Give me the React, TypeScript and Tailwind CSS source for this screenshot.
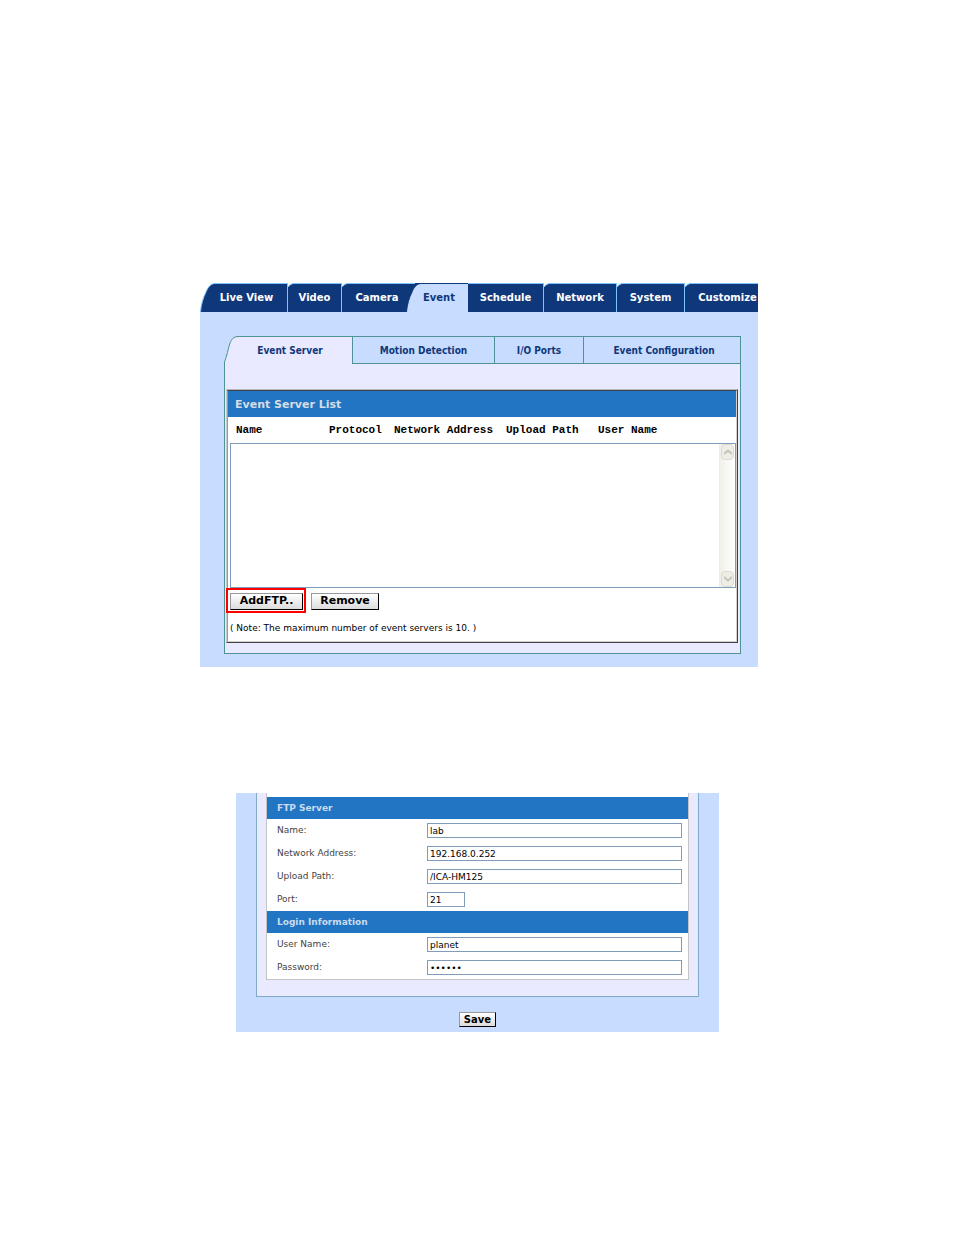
import React from 'react';

type Tab = { label: string; pad?: string };

const mainTabs: Tab[] = [
  { label: 'Live View', pad: 'pl-1.5' },
  { label: 'Video' },
  { label: 'Camera', pad: 'pl-1.5' },
  { label: 'Event', pad: 'pl-1' },
  { label: 'Schedule' },
  { label: 'Network' },
  { label: 'System' },
  { label: 'Customize', pad: 'pl-3' },
];

const subTabs = ['Motion Detection', 'I/O Ports', 'Event Configuration'];

const MainTab: React.FC<{ tab: Tab; index: number }> = ({ tab, index }) => {
  const active = tab.label === 'Event';
  const slanted = index === 0 || active;
  const beforeActive = mainTabs[index + 1]?.label === 'Event';
  const last = index === mainTabs.length - 1;

  return (
    <a
      href="#"
      className={`relative flex h-[29px] items-center justify-center border-t pb-0.5 whitespace-nowrap ${tab.pad ?? ''} ${
        active ? 'border-[#0f387b] bg-[#c8dcff] text-[#0f387b]' : 'border-[#7cc4ff] bg-[#0f387b] text-white'
      } ${active || beforeActive || last ? '' : 'border-r border-r-[#7cc4ff]'}`}
    >
      {slanted ? (
        <svg className="absolute -top-px left-0" width="15" height="29" viewBox="0 0 15 29" aria-hidden="true">
          <path d="M0 29V0H15V.5C11 .5 8 4 6 9C3 15 1 22 .5 29Z" fill={active ? '#0f387b' : '#fff'} />
          {active && <path d="M0 .5H9" stroke="#7cc4ff" />}
          <path
            d="M.5 29C1 22 3 15 6 9C8 4 11 .5 15 .5"
            fill="none"
            stroke={active ? '#0f387b' : '#7cc4ff'}
          />
        </svg>
      ) : (
        index !== 4 && (
          <svg className="absolute -top-px left-0" width="5" height="5" viewBox="0 0 5 5" aria-hidden="true">
            <path d="M0 0H5L0 4Z" fill="#fff" />
            <path d="M0 4L1.500 2L5 .5" fill="none" stroke="#7cc4ff" />
          </svg>
        )
      )}
      <span className="relative">{tab.label}</span>
    </a>
  );
};

const ScrollButton: React.FC<{ down?: boolean }> = ({ down }) => (
  <button
    type="button"
    aria-label={down ? 'Scroll down' : 'Scroll up'}
    className="flex h-4 w-[13px] items-center justify-center rounded-sm border border-[#dddbd0] bg-[#efeee6]"
  >
    <svg width="8" height="6" viewBox="0 0 8 6" aria-hidden="true">
      <path d={down ? 'M0 1L4 4.500L8 1' : 'M0 5L4 1.500L8 5'} fill="none" stroke="#c5c3b8" strokeWidth="2" />
    </svg>
  </button>
);

const buttonStyle =
  'border border-t-[#999] border-l-[#999] border-r-black border-b-black bg-linear-to-b from-white to-[#dcdcdc] font-bold text-black flex items-center justify-center';

const EventServerPage = () => (
  <section className="font-[Verdana,'DejaVu_Sans',sans-serif]">
    <nav className="grid grid-cols-[88fr_54fr_64fr_62fr_76fr_73fr_68fr_73fr] overflow-hidden text-[10px] font-bold">
      {mainTabs.map((tab, i) => (
        <MainTab key={tab.label} tab={tab} index={i} />
      ))}
    </nav>

    <div className="bg-[#c8dcff] pt-6 pr-[17px] pb-[13px] pl-6">
      <nav className="grid grid-cols-[128fr_142fr_89fr_158fr] font-['DejaVu_Sans_Condensed','Noto_Sans',sans-serif] text-[10px] font-bold text-[#0f387b]">
        <a href="#" className="relative flex h-7 items-center justify-center border-t border-[#4f9494] bg-[#e9e9ff] pl-1">
          <svg className="absolute -top-px left-0" width="15" height="28" viewBox="0 0 15 28" aria-hidden="true">
            <path d="M0 28V0H15V.5C9 .5 8 3 6 7C4 13 3 20 .5 26V28Z" fill="#c8dcff" />
            <path d="M.5 28V26C3 20 4 13 6 7C8 3 9 .5 15 .5" fill="none" stroke="#4f9494" />
          </svg>
          <span className="relative">Event Server</span>
        </a>
        {subTabs.map((label) => (
          <a
            key={label}
            href="#"
            className="flex h-7 items-center justify-center border-y border-l border-[#4f9494] whitespace-nowrap last:border-r last:pl-1"
          >
            {label}
          </a>
        ))}
      </nav>

      <div className="border border-t-0 border-[#4f9494] bg-[#e9e9ff] pt-[25px] pr-0.5 pb-[10px] pl-px">
        <div className="border border-t-[#b8b8c0] border-r-[#404048] border-b-[#404048] border-l-[#c8c8d0]">
          <div className="border border-t-[#404048] border-r-[#d4d0c8] border-b-[#d4d0c8] border-l-[#999] bg-white">
            <h2 className="flex h-[26px] items-center bg-[#2275c3] pt-0.5 pl-[7px] text-[11px] font-bold text-[#d8dce4]">
              Event Server List
            </h2>
            <table className="w-full table-fixed border-collapse">
              <thead>
                <tr className="h-[26px] text-left font-['Liberation_Mono',monospace] text-[11px] whitespace-nowrap text-black">
                  <th className="w-[101px] p-0 pl-2">Name</th>
                  <th className="w-[65px] p-0">Protocol</th>
                  <th className="w-28 p-0">Network Address</th>
                  <th className="w-[92px] p-0">Upload Path</th>
                  <th className="p-0">User Name</th>
                </tr>
              </thead>
              <tbody>
                <tr>
                  <td colSpan={5} className="p-0 pl-0.5">
                    <div className="flex h-[145px] border border-[#7f9db9]">
                      <select multiple aria-label="Event servers" className="block min-w-0 flex-1 appearance-none bg-white" />
                      <div className="flex w-4 flex-col items-center justify-between border-l border-[#eeede5] bg-linear-to-r from-[#f1f0ea] to-white">
                        <ScrollButton />
                        <ScrollButton down />
                      </div>
                    </div>
                  </td>
                </tr>
              </tbody>
            </table>
            <div className="flex gap-2 pt-[5px] pl-0.5 text-[11px]">
              <div className="relative">
                <button type="button" className={`${buttonStyle} h-[17px] w-[73px]`}>
                  AddFTP..
                </button>
                <span className="pointer-events-none absolute -top-[5px] -right-[3px] -bottom-[3px] -left-1 border-2 border-[#f00]" />
              </div>
              <button type="button" className={`${buttonStyle} h-[17px] w-[68px]`}>
                Remove
              </button>
            </div>
            <p className="mt-3 h-[19px] pl-0.5 text-[9px] leading-3 text-black">
              ( Note: The maximum number of event servers is 10. )
            </p>
          </div>
        </div>
      </div>
    </div>
  </section>
);

interface FieldProps {
  id: string;
  label: string;
  value: string;
  type?: string;
  short?: boolean;
}

const Field: React.FC<FieldProps> = ({ id, label, value, type = 'text', short }) => (
  <div className="flex h-[23px] items-center pr-1.5 pl-[10px]">
    <label htmlFor={id} className="w-[150px] shrink-0 pt-px text-[#444]">
      {label}
    </label>
    <input
      id={id}
      type={type}
      defaultValue={value}
      className={`h-[15px] min-w-0 border border-[#7f9db9] bg-white px-0.5 text-black ${short ? 'w-[38px]' : 'flex-1'}`}
    />
  </div>
);

const SectionTitle: React.FC<{ children: React.ReactNode }> = ({ children }) => (
  <h2 className="flex h-[22px] items-center bg-[#2275c3] pt-px pl-[10px] font-bold text-[#c8dcf0]">{children}</h2>
);

const FtpForm = () => (
  <form className="mt-[126px] mr-[39px] ml-9 bg-[#c8dcff] px-5 pb-[5px] font-[Verdana,'DejaVu_Sans',sans-serif] text-[9px]">
    <div className="border border-t-0 border-[#7faac8] bg-[#e9e9ff] px-[9px] pb-4">
      <div className="border border-t-0 border-[#c4c4c4] bg-white pt-1">
        <SectionTitle>FTP Server</SectionTitle>
        <Field id="name" label="Name:" value="lab" />
        <Field id="address" label="Network Address:" value="192.168.0.252" />
        <Field id="path" label="Upload Path:" value="/ICA-HM125" />
        <Field id="port" label="Port:" value="21" short />
        <SectionTitle>Login Information</SectionTitle>
        <Field id="user" label="User Name:" value="planet" />
        <Field id="password" label="Password:" value="planet" type="password" />
      </div>
    </div>
    <div className="mt-[15px] flex justify-center text-[10px]">
      <button type="button" className={`${buttonStyle} h-[15px] w-[37px]`}>
        Save
      </button>
    </div>
  </form>
);

export default function App() {
  return (
    <main className="min-h-screen bg-white pt-[283px] pb-[203px] pl-1">
      <div className="mx-auto max-w-[558px]">
        <EventServerPage />
        <FtpForm />
      </div>
    </main>
  );
}
